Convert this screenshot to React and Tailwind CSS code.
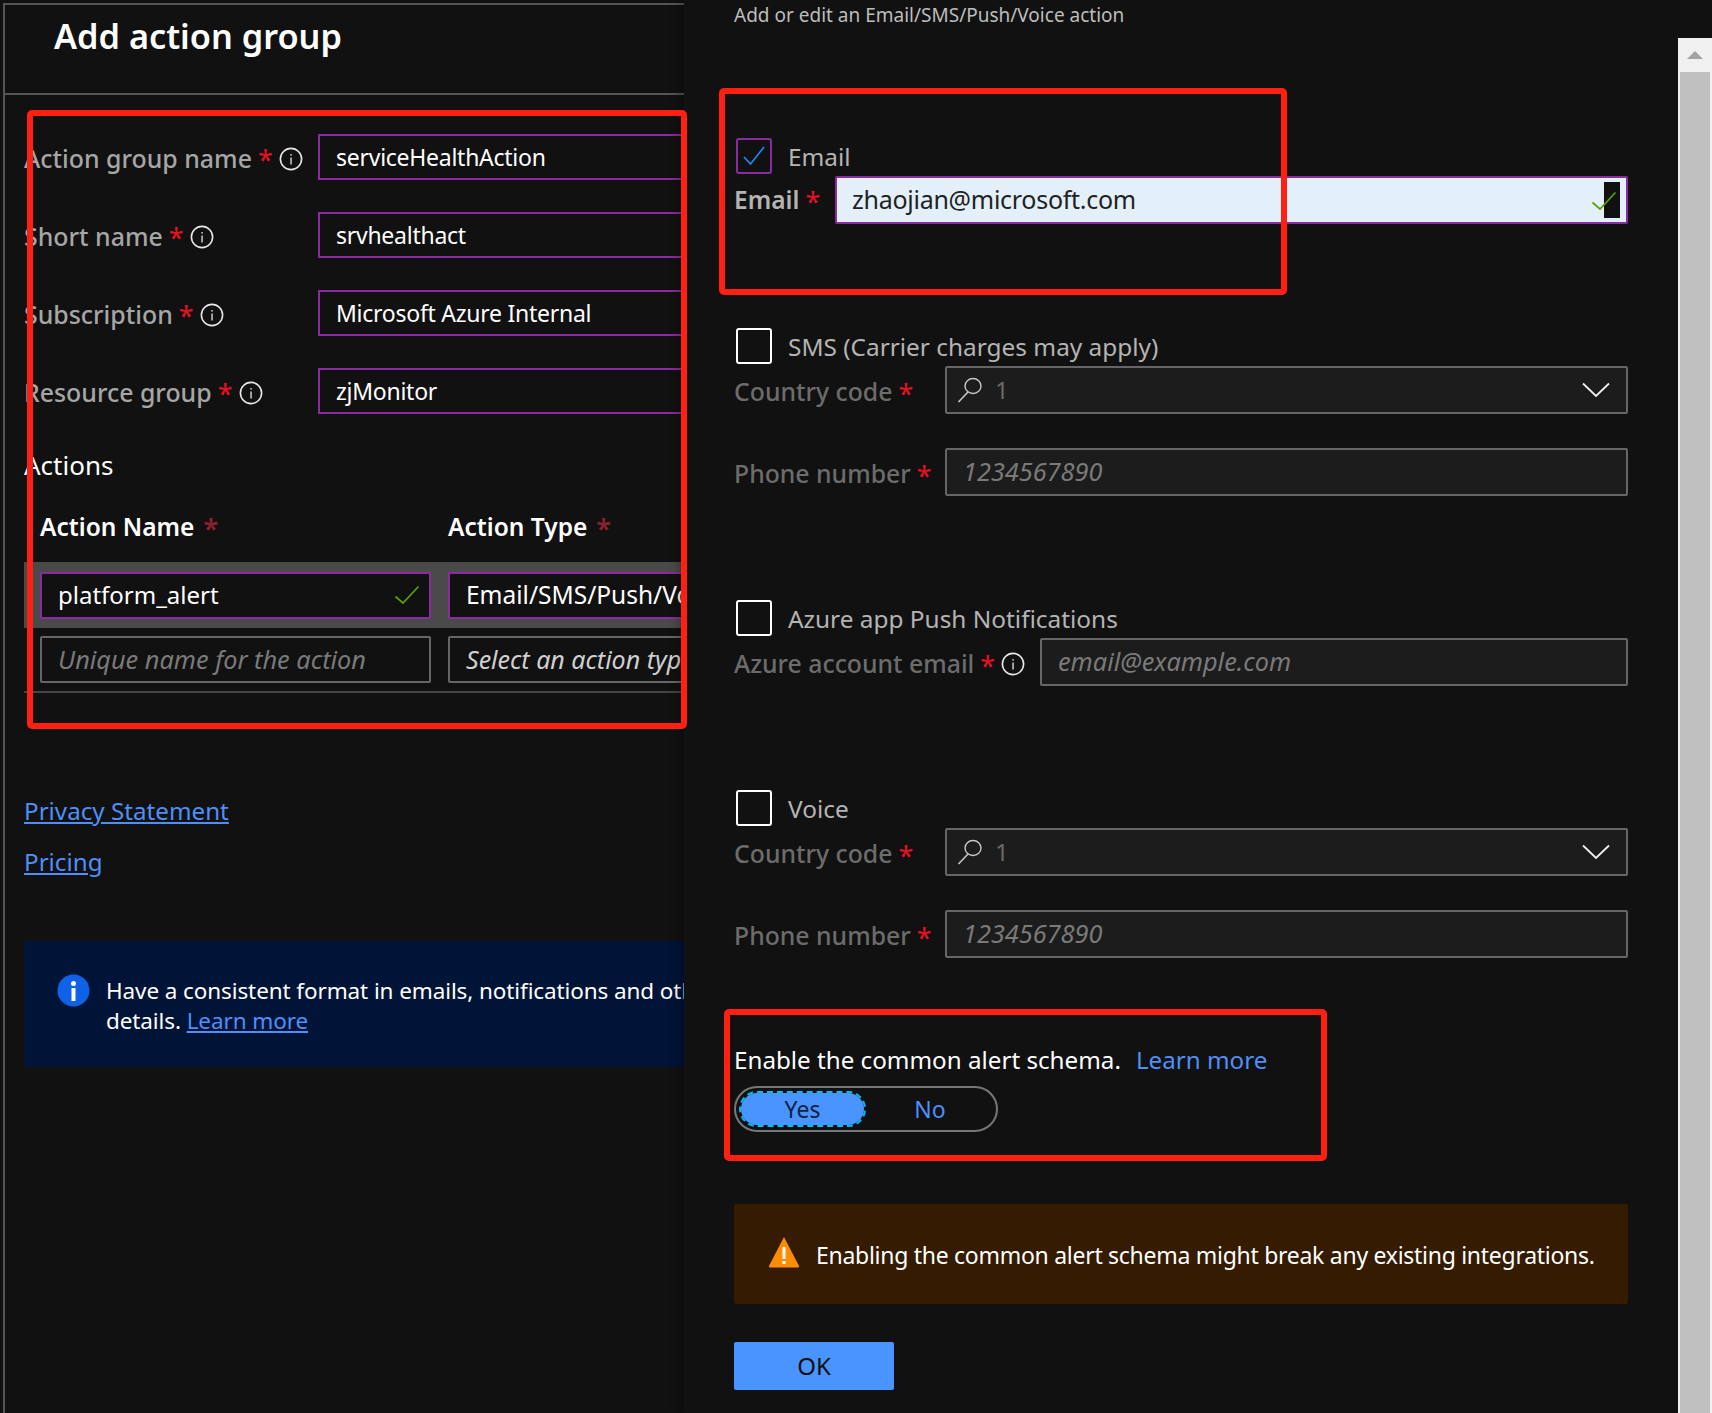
const FONT = "font-['Noto_Sans','Open_Sans',sans-serif]";

function Star({ className = "text-[#e81123]" }) {
  return <span className={`text-[27px] leading-none relative top-[1px] ${className}`}>*</span>;
}

function InfoIcon() {
  return (
    <svg width="24" height="24" viewBox="0 0 24 24" className="shrink-0">
      <circle cx="12" cy="12" r="10.6" fill="none" stroke="#e8e8e8" strokeWidth="1.6" />
      <rect x="11.4" y="10.5" width="1.3" height="7" fill="#e8e8e8" />
      <rect x="11.4" y="7" width="1.3" height="1.6" fill="#e8e8e8" />
    </svg>
  );
}

function Check({ color = "#57a300" }) {
  return (
    <svg width="26" height="20" viewBox="0 0 26 20">
      <path d="M1.5 11.5 L9 18 L24.5 1.5" fill="none" stroke={color} strokeWidth="1.7" />
    </svg>
  );
}

function Chevron() {
  return (
    <svg width="28" height="16" viewBox="0 0 28 16">
      <path d="M1 1.5 L14 14 L27 1.5" fill="none" stroke="#f0f0f0" strokeWidth="1.8" />
    </svg>
  );
}

function SearchIcon() {
  return (
    <svg width="26" height="26" viewBox="0 0 26 26">
      <ellipse cx="16" cy="9" rx="8" ry="7.5" fill="none" stroke="#c8c8c8" strokeWidth="1.4" />
      <path d="M11 15 L1.5 25" fill="none" stroke="#c8c8c8" strokeWidth="1.6" />
    </svg>
  );
}

function NameRow({ label, value }) {
  return (
    <div className="flex items-center h-[46px] mb-[32px]">
      <div className="w-[294px] shrink-0 flex items-center gap-[6px] relative top-[2px]">
        <span className="text-[24.9px] font-medium text-[#a6a6a6] whitespace-nowrap">{label}</span>
        <Star />
        <InfoIcon />
      </div>
      <div className="w-[480px] shrink-0 h-[46px] border-2 border-[#8a2ba3] flex items-center pl-[16px] text-[23px] tracking-[-0.26px] text-white whitespace-nowrap">
        {value}
      </div>
    </div>
  );
}

function Checkbox({ checked, label }) {
  return (
    <div className="flex items-center h-[36px]">
      <div className={`ml-[2px] w-[36px] h-[36px] rounded-[3px] border-2 flex items-center justify-center ${checked ? "border-[#8a2ba3]" : "border-white"}`}>
        {checked && (
          <svg width="24" height="24" viewBox="0 0 24 24">
            <path d="M2 13 L8.5 20 L22 3" fill="none" stroke="#1a8cff" strokeWidth="1.6" />
          </svg>
        )}
      </div>
      <span className="ml-[16px] text-[24.4px] text-[#b4b4b4] relative top-[1px] whitespace-nowrap">{label}</span>
    </div>
  );
}

function DimLabel({ text, width, info }) {
  return (
    <div style={{ width }} className="shrink-0 flex items-center gap-[6px] relative top-[2px]">
      <span className="text-[24.8px] font-medium text-[#6c6c6c] whitespace-nowrap">{text}</span>
      <Star />
      {info && <InfoIcon />}
    </div>
  );
}

function CountryRow() {
  return (
    <div className="flex items-center h-[48px] mt-[2px]">
      <DimLabel text="Country code" width={211} />
      <div className="flex-1 h-[48px] rounded-[2px] border-2 border-[#666666] bg-[#1c1c1c] flex items-center pl-[10px] pr-[16px]">
        <SearchIcon />
        <span className="ml-[12px] text-[24px] text-[#6a6a6a]">1</span>
        <span className="ml-auto flex items-center"><Chevron /></span>
      </div>
    </div>
  );
}

function PlaceholderBox({ text }) {
  return (
    <div className="flex-1 h-[48px] rounded-[2px] border-2 border-[#666666] bg-[#1c1c1c] flex items-center pl-[16px] text-[25.3px] italic text-[#7a7a7a]">
      {text}
    </div>
  );
}

function PhoneRow() {
  return (
    <div className="flex items-center h-[48px] mt-[34px]">
      <DimLabel text="Phone number" width={211} />
      <PlaceholderBox text="1234567890" />
    </div>
  );
}

export default function App() {
  return (
    <div className={`relative w-[1712px] h-[1413px] overflow-hidden bg-[#111111] flex ${FONT}`}>
      {/* left blade */}
      <div className="w-[684px] h-[1413px] shrink-0 overflow-hidden pt-[3px] pl-[3px]">
        <div className="border-t-2 border-l-2 border-[#555555] h-full">
          <div className="h-[90px] border-b-2 border-[#555555] pl-[49px] pt-[8px]">
            <h1 className="text-[34.3px] font-semibold text-white leading-[46px] whitespace-nowrap">Add action group</h1>
          </div>

          <div className="pt-[39px] pl-[19px]">
            <NameRow label="Action group name" value="serviceHealthAction" />
            <NameRow label="Short name" value="srvhealthact" />
            <NameRow label="Subscription" value="Microsoft Azure Internal" />
            <NameRow label="Resource group" value="zjMonitor" />

            <div className="text-[26px] text-white leading-[40px] -mt-[1px]">Actions</div>

            <div className="flex mt-[22px] h-[40px] items-center pl-[16px]">
              <div className="w-[408px] flex items-center gap-[9px] text-[24.5px] font-semibold text-white">
                Action Name <Star className="text-[#8e2030]" />
              </div>
              <div className="flex items-center gap-[9px] text-[24.5px] font-semibold text-white whitespace-nowrap">
                Action Type <Star className="text-[#8e2030]" />
              </div>
            </div>

            <div className="flex h-[66px] items-center bg-[#4a4a4a] mt-[15px] pl-[16px]">
              <div className="w-[391px] h-[47px] shrink-0 rounded-[2px] border-2 border-[#8a2ba3] bg-[#111111] flex items-center pl-[16px] pr-[9px] text-[24px] text-white">
                platform_alert
                <span className="ml-auto flex"><Check /></span>
              </div>
              <div className="w-[300px] h-[47px] shrink-0 ml-[17px] rounded-[2px] border-2 border-[#8a2ba3] bg-[#111111] flex items-center pl-[16px] text-[24.5px] text-white whitespace-nowrap">
                Email/SMS/Push/Voice
              </div>
            </div>

            <div className="flex h-[47px] items-center mt-[8px] pl-[16px]">
              <div className="w-[391px] h-[47px] shrink-0 rounded-[2px] border-2 border-[#666666] flex items-center pl-[16px] text-[25.3px] italic text-[#7a7a7a]">
                Unique name for the action
              </div>
              <div className="w-[300px] h-[47px] shrink-0 ml-[17px] rounded-[2px] border-2 border-[#666666] flex items-center pl-[16px] text-[25px] italic text-[#d0d0d0] whitespace-nowrap">
                Select an action type
              </div>
            </div>

            <div className="h-[2px] bg-[#444444] mt-[8px]"></div>

            <div className="mt-[100px] text-[24.2px] leading-[36px] text-[#4f8ff7] underline">Privacy Statement</div>
            <div className="mt-[15px] text-[24.2px] leading-[36px] text-[#4f8ff7] underline">Pricing</div>

            <div className="mt-[61px] h-[126px] bg-[#001437] flex pl-[33px] pt-[35px] whitespace-nowrap">
              <svg width="33" height="33" viewBox="0 0 33 33" className="shrink-0 -mt-[2px]">
                <circle cx="16.5" cy="16.5" r="16" fill="#0f62e6" />
                <rect x="14.5" y="14" width="4" height="13" fill="#ffffff" />
                <circle cx="16.5" cy="9.5" r="2.5" fill="#ffffff" />
              </svg>
              <div className="ml-[16px] text-[22.5px] tracking-[-0.1px] leading-[30px] text-white">
                <div>Have a consistent format in emails, notifications and other</div>
                <div>details. <span className="text-[#4f8ff7] underline">Learn more</span></div>
              </div>
            </div>
          </div>
        </div>
      </div>

      {/* right blade */}
      <div className="flex-1 min-w-0 h-[1413px] pl-[50px] pr-[50px] shadow-[-6px_0_8px_rgba(0,0,0,0.25)] bg-[#111111]">
        <div className="h-[30px] flex items-center text-[19px] text-[#bdbdbd] whitespace-nowrap">
          Add or edit an Email/SMS/Push/Voice action
        </div>

        <div className="mt-[108px]"><Checkbox checked label="Email" /></div>
        <div className="flex items-center h-[48px] mt-[2px]">
          <div className="w-[101px] shrink-0 flex items-center gap-[6px]">
            <span className="text-[24.5px] font-semibold text-[#b4b4b4]">Email</span>
            <Star />
          </div>
          <div className="flex-1 h-[48px] rounded-[2px] border-2 border-[#8a2ba3] bg-[#e3f0fa] flex items-center pl-[15px] text-[25px] tracking-[-0.27px] text-[#222222] relative">
            zhaojian@microsoft.com
            <div className="absolute right-[6px] top-[4px] w-[16px] h-[36px] bg-[#111111]"></div>
            <div className="absolute right-[9px] top-[13px] flex"><Check /></div>
          </div>
        </div>

        <div className="mt-[104px]"><Checkbox label="SMS (Carrier charges may apply)" /></div>
        <CountryRow />
        <PhoneRow />

        <div className="mt-[104px]"><Checkbox label="Azure app Push Notifications" /></div>
        <div className="flex items-center h-[48px] mt-[2px]">
          <DimLabel text="Azure account email" width={306} info />
          <PlaceholderBox text="email@example.com" />
        </div>

        <div className="mt-[104px]"><Checkbox label="Voice" /></div>
        <CountryRow />
        <PhoneRow />

        <div className="mt-[86px] h-[32px] flex items-center text-[24.2px] text-white whitespace-nowrap">
          Enable the common alert schema.
          <span className="ml-[15px] text-[#4f8ff7]">Learn more</span>
        </div>

        <div className="mt-[10px] w-[264px] h-[46px] rounded-full border-2 border-[#777777] flex items-center pl-[3px] text-[23px]">
          <div className="w-[127px] h-[36px] rounded-full bg-[#4a94ff] bg-clip-padding border-2 border-dashed border-[#00bcf2] flex items-center justify-center text-[#12233f]">Yes</div>
          <div className="flex-1 text-center text-[#4f8ff7] pr-[2px]">No</div>
        </div>

        <div className="mt-[72px] h-[100px] rounded-[3px] bg-[#351c00] flex items-center pl-[34px] text-[23px] tracking-[-0.28px] text-white whitespace-nowrap">
          <svg width="32" height="32" viewBox="0 0 32 32" className="shrink-0 -mt-[5px]">
            <path d="M16 1 L31 30 Q31.5 31.5 30 31.5 L2 31.5 Q0.5 31.5 1 30 Z" fill="#ff8c00" />
            <rect x="14.5" y="11" width="3" height="12" fill="#ffffff" />
            <rect x="14.5" y="25" width="3" height="3" fill="#ffffff" />
          </svg>
          <span className="ml-[16px] relative top-[1px]">Enabling the common alert schema might break any existing integrations.</span>
        </div>

        <div className="mt-[38px] w-[160px] h-[48px] rounded-[2px] bg-[#4a94ff] flex items-center justify-center text-[24px] text-[#111111]">
          OK
        </div>
      </div>

      {/* scrollbar */}
      <div className="w-[34px] h-[1375px] mt-[38px] shrink-0 bg-[#f0f0f0] px-[2px]">
        <div className="h-[34px] flex items-center justify-center">
          <svg width="16" height="8" viewBox="0 0 16 8"><path d="M8 0 L16 8 L0 8 Z" fill="#a3a3a3" /></svg>
        </div>
        <div className="h-[1341px] bg-[#c0c0c0]"></div>
      </div>

      {/* red annotation boxes drawn over the screenshot */}
      <div className="absolute left-[27px] top-[110px] w-[660px] h-[619px] rounded-[5px] border-[6px] border-[#ff2012]"></div>
      <div className="absolute left-[719px] top-[88px] w-[568px] h-[207px] rounded-[5px] border-[6px] border-[#ff2012]"></div>
      <div className="absolute left-[724px] top-[1009px] w-[603px] h-[152px] rounded-[5px] border-[6px] border-[#ff2012]"></div>
    </div>
  );
}
